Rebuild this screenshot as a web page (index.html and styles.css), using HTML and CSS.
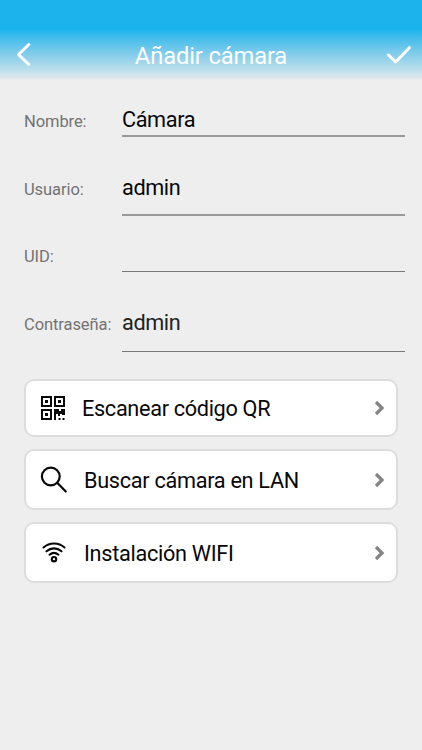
FILE: index.html
```html
<!DOCTYPE html>
<html lang="es">
<head>
<meta charset="utf-8">
<title>Añadir cámara</title>
<link rel="stylesheet" href="styles.css">
</head>
<body>
<header class="header">
  <svg class="back" width="20" height="28" viewBox="0 0 20 28"><path d="M14.800 2.500 4.500 12.500l10.300 10"/></svg>
  <h1 class="title">Añadir cámara</h1>
  <svg class="check" width="28" height="28" viewBox="0 0 28 28"><path d="m2.500 13 7.200 7L23.300 5.700"/></svg>
</header>
<main>
  <form class="form">
    <div class="row short"><label class="label">Nombre:</label><div class="field line-wide">Cámara</div></div>
    <div class="row tall"><label class="label">Usuario:</label><div class="field line-wide">admin</div></div>
    <div class="row mid"><label class="label">UID:</label><div class="field"></div></div>
    <div class="row tall"><label class="label">Contraseña:</label><div class="field dim">admin</div></div>
  </form>
  <nav class="actions">
    <div class="card qr">
      <svg class="icon" width="28" height="28" viewBox="0 0 28 28">
        <g fill="none" stroke="#080808" stroke-width="2"><path d="M2 3h9v9H2zM15 3h9v9h-9zM2 16h9v9H2z"/></g>
        <path fill="#080808" d="M5 6h3v3H5zM18 6h3v3h-3zM5 19h3v3H5zM14 15h5v2h2v-2h4v6h-3v-1h-2v2h-2v-2h-2v6h-2zM18.500 24h2v2h-2zM22.500 24h2v2h-2z"/>
      </svg>
      <span class="text">Escanear código QR</span>
      <svg class="chevron" width="12" height="16" viewBox="0 0 12 16"><path d="m2 2 6 6-6 6"/></svg>
    </div>
    <div class="card">
      <svg class="icon" width="28" height="28" viewBox="0 0 28 28"><g fill="none" stroke="#080808" stroke-width="2.200" stroke-linecap="round"><circle cx="10.800" cy="10.500" r="8.900"/><path d="m17.500 17 8.300 8.500"/></g></svg>
      <span class="text">Buscar cámara en LAN</span>
      <svg class="chevron" width="12" height="16" viewBox="0 0 12 16"><path d="m2 2 6 6-6 6"/></svg>
    </div>
    <div class="card">
      <svg class="icon" width="28" height="28" viewBox="0 0 28 28"><g fill="none" stroke="#080808" stroke-width="2.100" stroke-linecap="round"><path d="M3.500 8.500c6-5.300 15.100-5.300 21 0M6.500 12.300c4.500-3.900 10.500-3.900 15 0M9.500 15.700c2.700-2.200 6.300-2.200 9 0"/><circle cx="14" cy="20.200" r="2.200"/></g></svg>
      <span class="text">Instalación WIFI</span>
      <svg class="chevron" width="12" height="16" viewBox="0 0 12 16"><path d="m2 2 6 6-6 6"/></svg>
    </div>
  </nav>
</main>
</body>
</html>
```
FILE: styles.css
```css
* { box-sizing: border-box; }
body {
  margin: 0;
  min-height: 750px;
  background: #eee;
  color: #080808;
  font-family: Roboto, "Liberation Sans", sans-serif;
}
.header {
  display: flex;
  align-items: center;
  justify-content: space-between;
  height: 80px;
  padding: 31px 8px 0 14px;
  background: linear-gradient(#1cb3ed 0, #1cb3ed 29px, #44bdeb 38px, #83cdea 54px, #b5dcec 68px, #dde8ed 78px, #eee 80px);
}
.header svg { fill: none; stroke: #fff; stroke-width: 3; stroke-linecap: round; stroke-linejoin: round; }
.title { margin: 0; padding-left: 2px; color: #fff; font-size: 23.7px; font-weight: 400; line-height: 28px; letter-spacing: -0.120px; }
.form { padding: 0 17px 0 24px; }
.row { display: grid; grid-template-columns: 98px 1fr; }
.short { height: 56.500px; }
.tall { height: 79.500px; }
.mid { height: 56px; }
.label { padding-top: 32px; color: #737373; font-size: 16.5px; line-height: 20px; letter-spacing: -0.080px; white-space: nowrap; }
.field { padding-top: 26px; border-bottom: 1px solid #777; font-size: 21.7px; line-height: 28px; letter-spacing: -0.400px; }
.line-wide { border-bottom: 2px solid #999; }
.tall .label { padding-top: 43px; }
.tall .field { padding-top: 37px; }
.mid .label { padding-top: 31px; }
.dim { color: #222; }
.actions { padding: 27px 24px 0; display: grid; gap: 12px; }
.card {
  display: flex;
  align-items: center;
  height: 61px;
  padding: 2px 10px 0 14px;
  border: 2px solid #ddd;
  border-radius: 10px;
  background: #fff;
}
.qr { height: 58px; padding-top: 1px; }
.icon { flex: none; }
.text { flex: 1; padding: 2px 0 0 16px; font-size: 21.7px; line-height: 28px; letter-spacing: -0.300px; }
.qr .text { padding-left: 14px; letter-spacing: -0.330px; }
.chevron { fill: none; stroke: #858585; stroke-width: 3.300; }
```
